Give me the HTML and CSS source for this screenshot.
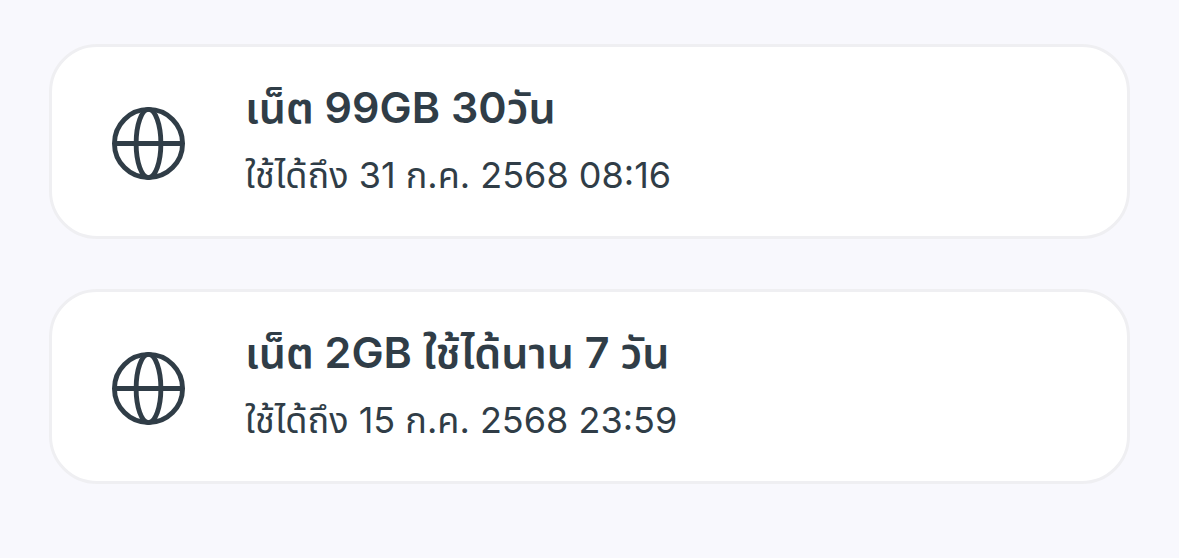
FILE: index.html
```html
<!DOCTYPE html>
<html lang="th">
<head>
<meta charset="utf-8">
<meta name="viewport" content="width=device-width, initial-scale=1">
<title>แพ็กเกจเน็ต</title>
<link rel="stylesheet" href="styles.css">
</head>
<body>
<main class="package-list">
  <article class="package">
    <svg class="package-icon" viewBox="0 0 72 72" aria-hidden="true"><circle cx="36" cy="36" r="33.6"/><ellipse cx="36" cy="36" rx="12.2" ry="33.6"/><path d="M2.4 36h67.2"/></svg>
    <div class="package-text">
      <h2 class="package-name">เน็ต 99GB 30วัน</h2>
      <p class="package-expiry">ใช้ได้ถึง 31 ก.ค. 2568 08:16</p>
    </div>
  </article>
  <article class="package">
    <svg class="package-icon" viewBox="0 0 72 72" aria-hidden="true"><circle cx="36" cy="36" r="33.6"/><ellipse cx="36" cy="36" rx="12.2" ry="33.6"/><path d="M2.4 36h67.2"/></svg>
    <div class="package-text">
      <h2 class="package-name">เน็ต 2GB ใช้ได้นาน 7 วัน</h2>
      <p class="package-expiry">ใช้ได้ถึง 15 ก.ค. 2568 23:59</p>
    </div>
  </article>
</main>
</body>
</html>
```
FILE: styles.css
```css
* {
  box-sizing: border-box;
}

body {
  margin: 0;
  background: #f8f8fd;
  color: #303d47;
  font-family: Inter, "Noto Sans Thai", sans-serif;
}

.package-list {
  display: grid;
  gap: 50px;
  padding: 44px 49px;
}

.package {
  display: flex;
  align-items: center;
  gap: 60px;
  padding: 28px 60px 25px;
  border: 3px solid #efeff2;
  border-radius: 48px;
  background: #fff;
}

.package-icon {
  flex: none;
  width: 73px;
  height: 73px;
  fill: none;
  stroke: currentColor;
  stroke-width: 4.8;
}

.package-name,
.package-expiry {
  margin: 0;
}

.package-name {
  font-size: 43px;
  font-weight: 600;
  line-height: 64px;
}

.package-expiry {
  font-size: 36px;
  font-weight: 400;
  line-height: 72px;
}
```
